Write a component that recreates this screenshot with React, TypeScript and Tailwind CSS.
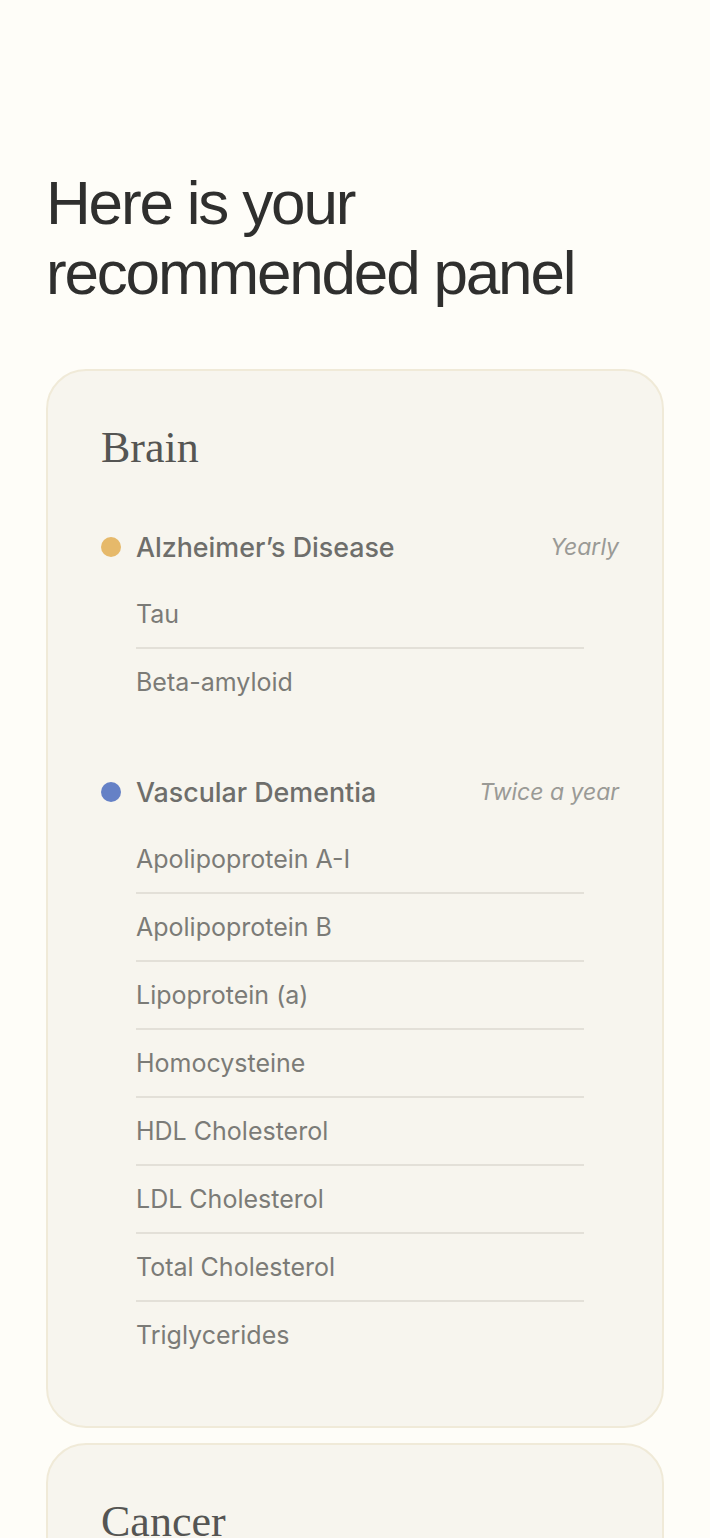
import React from 'react';

type Group = {
  name: string;
  frequency: string;
  dot: string;
  markers: string[];
};

type Section = {
  title: string;
  groups: Group[];
};

const sections: Section[] = [
  {
    title: 'Brain',
    groups: [
      {
        name: 'Alzheimer’s Disease',
        frequency: 'Yearly',
        dot: 'bg-[#e6b96a]',
        markers: ['Tau', 'Beta-amyloid'],
      },
      {
        name: 'Vascular Dementia',
        frequency: 'Twice a year',
        dot: 'bg-[#6581c6]',
        markers: [
          'Apolipoprotein A-I',
          'Apolipoprotein B',
          'Lipoprotein (a)',
          'Homocysteine',
          'HDL Cholesterol',
          'LDL Cholesterol',
          'Total Cholesterol',
          'Triglycerides',
        ],
      },
    ],
  },
  {
    title: 'Cancer',
    groups: [
      {
        name: 'Colorectal Cancer',
        frequency: 'Yearly',
        dot: 'bg-[#e6b96a]',
        markers: ['CEA', 'CA 19-9'],
      },
    ],
  },
];

function MarkerGroup({ group }: { group: Group }) {
  return (
    <div>
      <div className="flex items-center h-[36px]">
        <span className={`w-[20px] h-[20px] rounded-full shrink-0 ${group.dot}`} />
        <span className="ml-[15px] text-[26.8px] leading-[36px] font-medium text-[#6e6e6b]">
          {group.name}
        </span>
        <span className="ml-auto text-[23px] leading-[36px] italic text-[#9a9a96]">
          {group.frequency}
        </span>
      </div>
      <ul className="mt-[16px] ml-[35px] mr-[35px]">
        {group.markers.map((m, i) => (
          <li
            key={m}
            className={`py-[15px] text-[25px] leading-[36px] text-[#7b7b77] ${
              i < group.markers.length - 1 ? 'border-b-2 border-[#e3e0d8]' : ''
            }`}
          >
            {m}
          </li>
        ))}
      </ul>
    </div>
  );
}

function SectionCard({ section }: { section: Section }) {
  return (
    <div className="rounded-[40px] border-2 border-[#f0ead8] bg-[#f7f5ee] pl-[53px] pr-[43px] pt-[52px] pb-[58px]">
      <h2 className="font-['Liberation_Serif',serif] text-[44px] leading-[50px] text-[#555553]">
        {section.title}
      </h2>
      <div className="mt-[56px] flex flex-col gap-[59px]">
        {section.groups.map((g) => (
          <MarkerGroup key={g.name} group={g} />
        ))}
      </div>
    </div>
  );
}

export default function App() {
  return (
    <div className="min-h-screen bg-[#fefdf8] font-['Inter',sans-serif] px-[46px] pt-[168px] pb-[40px]">
      <h1 className="font-['Liberation_Sans',Arial,sans-serif] text-[62px] leading-[70px] tracking-[-0.035em] text-[#2f2f2e]">
        Here is your
        <br />
        recommended panel
      </h1>
      <div className="mt-[61px] flex flex-col gap-[15px]">
        {sections.map((s) => (
          <SectionCard key={s.title} section={s} />
        ))}
      </div>
    </div>
  );
}
